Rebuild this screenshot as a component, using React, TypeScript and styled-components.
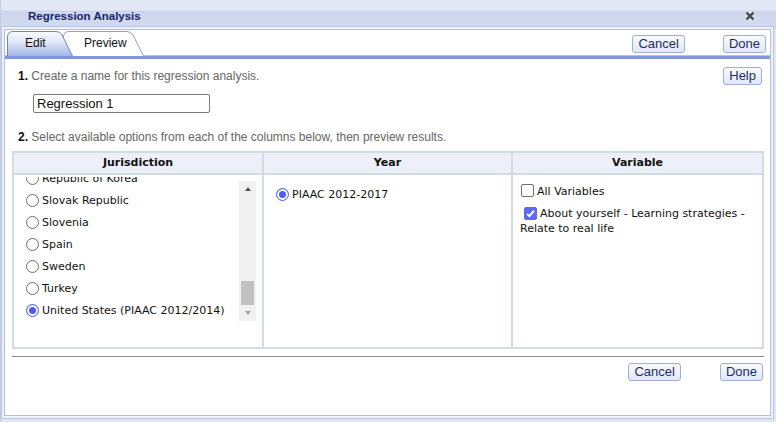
import React, { useLayoutEffect, useRef } from 'react';
import styled, { createGlobalStyle } from 'styled-components';

const GlobalStyle = createGlobalStyle`
  html, body { margin: 0; padding: 0; }
  body {
    background: #dfe5f3;
    font-family: "Liberation Sans", Arial, sans-serif;
  }
  * { box-sizing: border-box; }
`;

const countries = [
  'Austria', 'Belgium', 'Canada', 'Chile', 'Czech Republic', 'Denmark',
  'Estonia', 'Finland', 'France', 'Germany', 'Greece', 'Hungary', 'Ireland',
  'Israel', 'Italy', 'Japan', 'Kazakhstan', 'Lithuania', 'Mexico',
  'Netherlands', 'New Zealand', 'Norway', 'Peru', 'Poland',
  'Republic of Korea', 'Slovak Republic', 'Slovenia', 'Spain', 'Sweden',
  'Turkey', 'United States (PIAAC 2012/2014)',
];

const Window = styled.div`
  width: 776px;
  height: 422px;
  display: flex;
  flex-direction: column;
  background: linear-gradient(#e2e8f5 0, #e2e8f5 10px, #cdd6ed 11px, #d2daef 29px, #dfe5f3 30px);
  border-left: 1px solid #c4cde8;
`;

const TitleBar = styled.div`
  height: 29px;
  display: flex;
  align-items: center;
  padding: 3px 0 0 27px;
`;

const Title = styled.div`
  font: bold 11.5px "Liberation Sans", Arial, sans-serif;
  color: #17256b;
`;

const Close = styled.button`
  margin-left: auto;
  margin-right: 19px;
  width: 14px;
  height: 14px;
  padding: 0;
  border: none;
  background: none;
  display: flex;
`;

const Panel = styled.div`
  flex: 1;
  margin: 0 5px 6px 3px;
  display: flex;
  flex-direction: column;
  background: #fff;
  border: 1px solid #b3bedf;
  box-shadow: 0 0 0 2px #eef1f9, 0 0 0 3px #bcc6e3;
`;

const TabBar = styled.div`
  height: 29px;
  display: flex;
  align-items: flex-end;
  padding: 0 4px 0 2px;
  border-bottom: 3px solid #7f97d9;
  box-shadow: 0 -1px 0 #b4c3ea inset;
`;

const Tab = styled.div<{ $active?: boolean; $w: number; $pad: number }>`
  position: relative;
  width: ${p => p.$w}px;
  height: 25px;
  margin-left: ${p => (p.$active ? 0 : -10)}px;
  z-index: ${p => (p.$active ? 2 : 1)};
  padding-left: ${p => p.$pad}px;
  font-size: 12px;
  line-height: 24px;
  color: #111;
  cursor: pointer;
`;

const TabShape = styled.svg`
  position: absolute;
  left: 0;
  top: 0;
`;

const TabLabel = styled.span`
  position: relative;
`;

const Btn = styled.button<{ $gap?: number }>`
  height: 18px;
  padding: 0 5px;
  margin-right: ${p => p.$gap ?? 0}px;
  font: 13px "Liberation Sans", Arial, sans-serif;
  line-height: 16px;
  color: #1f2c62;
  border: 1px solid #9eb0da;
  border-radius: 3px;
  background: linear-gradient(#f7f9fd, #e1e8f7);
`;

const TopButtons = styled.div`
  margin-left: auto;
  align-self: flex-start;
  margin-top: 5px;
  display: flex;
`;

const Body = styled.div`
  padding: 0 6px 0 7px;
  display: flex;
  flex-direction: column;
`;

const StepRow = styled.div<{ $top: number }>`
  display: flex;
  align-items: center;
  margin-top: ${p => p.$top}px;
  padding: 0 2px 0 6px;
  min-height: 14px;
`;

const StepText = styled.div`
  font-size: 12px;
  line-height: 14px;
  color: #666;
  b { color: #111; }
`;

const NameInput = styled.input`
  width: 177px;
  height: 19px;
  margin: 9px 0 0 21px;
  padding: 0 3px;
  font: 13px "Liberation Sans", Arial, sans-serif;
  color: #111;
  border: 1px solid #7a7a7a;
  border-radius: 2px;
  outline: none;
`;

const Grid = styled.div`
  margin-top: 7px;
  display: grid;
  grid-template-columns: 248px 247px 249px;
  grid-template-rows: 20px 172px;
  gap: 2px;
  padding: 2px;
  background: #d2dde1;
  font-family: "DejaVu Sans", Verdana, sans-serif;
  font-size: 11px;
  color: #111;
`;

const HeadCell = styled.div`
  background: #edf0f9;
  font-weight: bold;
  text-align: center;
  line-height: 20px;
`;

const Cell = styled.div<{ $pad: string }>`
  background: #fff;
  padding: ${p => p.$pad};
`;

const ScrollArea = styled.div`
  display: flex;
  height: 144px;
`;

const List = styled.div`
  flex: 1;
  overflow: hidden;
`;

const Scrollbar = styled.div`
  width: 17px;
  margin-top: 4px;
  display: flex;
  flex-direction: column;
  background: #f1f1f1;
`;

const Arrow = styled.div<{ $down?: boolean }>`
  height: 16px;
  display: flex;
  align-items: center;
  justify-content: center;
  &::before {
    content: '';
    border-left: 3.5px solid transparent;
    border-right: 3.5px solid transparent;
    ${p => (p.$down ? 'border-top: 4px solid #a3a3a3;' : 'border-bottom: 4px solid #505050;')}
  }
`;

const Track = styled.div`
  flex: 1;
  display: flex;
  flex-direction: column;
  justify-content: flex-end;
  padding: 0 2px;
`;

const Thumb = styled.div`
  height: 24px;
  background: #c1c1c1;
`;

const Option = styled.label`
  display: flex;
  align-items: center;
  height: 22px;
  white-space: nowrap;
  cursor: pointer;
`;

const Radio = styled.span<{ $on?: boolean }>`
  flex: none;
  width: 13px;
  height: 13px;
  margin: 0 3px 0 4px;
  border-radius: 50%;
  border: 1px solid ${p => (p.$on ? '#5a6cf2' : '#6f6f6f')};
  background: ${p => (p.$on ? '#4c5ef1' : '#fff')};
  box-shadow: ${p => (p.$on ? 'inset 0 0 0 2px #fff' : 'none')};
`;

const VarOption = styled.label`
  display: block;
  line-height: 15px;
  margin-bottom: 7px;
  cursor: pointer;
`;

const Check = styled.span<{ $on?: boolean; $left: number }>`
  display: inline-flex;
  vertical-align: -2px;
  width: 13px;
  height: 13px;
  margin: 0 3px 0 ${p => p.$left}px;
  border-radius: 2px;
  border: 1px solid ${p => (p.$on ? '#5a6af2' : '#6f6f6f')};
  background: ${p => (p.$on ? '#5a6af2' : '#fff')};
`;

const Separator = styled.div`
  margin-top: 7px;
  height: 1px;
  background: #8a8a8a;
`;

const BottomButtons = styled.div`
  margin-top: 6px;
  display: flex;
  justify-content: flex-end;
  padding-right: 1px;
`;

const TabOutline = ({ w, id, active }: { w: number; id: string; active?: boolean }) => (
  <TabShape width={w} height={25} viewBox={`0 0 ${w} 25`}>
    <defs>
      <linearGradient id={id} x1="0" y1="0" x2="0" y2="1">
        <stop offset="0" stopColor="#fbfcff" />
        <stop offset="0.4" stopColor="#e1e8f8" />
        <stop offset="1" stopColor="#a3b6e7" />
      </linearGradient>
    </defs>
    <path
      d={`M0.5 25 V6 Q0.5 0.5 6 0.5 H${w - 17} Q${w - 13} 0.5 ${w - 11} 4 L${w - 0.5} 25`}
      fill={active ? `url(#${id})` : '#fff'}
      stroke={active ? '#6f84c5' : '#8e9fd3'}
    />
  </TabShape>
);

const CheckMark = () => (
  <svg width="11" height="11" viewBox="0 0 11 11">
    <path d="M2 5.8 L4.4 8.2 L9 2.6" fill="none" stroke="#fff" strokeWidth="1.9" />
  </svg>
);

export default function App() {
  const listRef = useRef<HTMLDivElement>(null);

  useLayoutEffect(() => {
    if (listRef.current) listRef.current.scrollTop = listRef.current.scrollHeight;
  }, []);

  return (
    <>
      <GlobalStyle />
      <Window>
        <TitleBar>
          <Title>Regression Analysis</Title>
          <Close aria-label="Close">
            <svg width="14" height="14" viewBox="0 0 14 14">
              <path d="M3.5 3.5 L10.5 10.5 M10.5 3.5 L3.5 10.5" stroke="#fff" strokeWidth="4.4" />
              <path d="M3.5 3.5 L10.5 10.5 M10.5 3.5 L3.5 10.5" stroke="#4d4f58" strokeWidth="2.6" />
            </svg>
          </Close>
        </TitleBar>
        <Panel>
          <TabBar>
            <Tab $active $w={66} $pad={18}>
              <TabOutline w={66} id="tab-edit" active />
              <TabLabel>Edit</TabLabel>
            </Tab>
            <Tab $w={81} $pad={21}>
              <TabOutline w={81} id="tab-preview" />
              <TabLabel>Preview</TabLabel>
            </Tab>
            <TopButtons>
              <Btn $gap={38}>Cancel</Btn>
              <Btn>Done</Btn>
            </TopButtons>
          </TabBar>
          <Body>
            <StepRow $top={8}>
              <StepText><b>1.</b> Create a name for this regression analysis.</StepText>
              <Btn style={{ marginLeft: 'auto' }}>Help</Btn>
            </StepRow>
            <NameInput defaultValue="Regression 1" />
            <StepRow $top={17}>
              <StepText><b>2.</b> Select available options from each of the columns below, then preview results.</StepText>
            </StepRow>
            <Grid>
              <HeadCell>Jurisdiction</HeadCell>
              <HeadCell>Year</HeadCell>
              <HeadCell>Variable</HeadCell>
              <Cell $pad="2px 6px 0 8px">
                <ScrollArea>
                  <List ref={listRef}>
                    {countries.map(c => (
                      <Option key={c}>
                        <Radio $on={c.startsWith('United States')} />
                        {c}
                      </Option>
                    ))}
                  </List>
                  <Scrollbar>
                    <Arrow />
                    <Track><Thumb /></Track>
                    <Arrow $down />
                  </Scrollbar>
                </ScrollArea>
              </Cell>
              <Cell $pad="8px 8px 0 8px">
                <Option>
                  <Radio $on />
                  PIAAC 2012-2017
                </Option>
              </Cell>
              <Cell $pad="9px 8px 0 7px">
                <VarOption>
                  <Check $left={1} />
                  All Variables
                </VarOption>
                <VarOption>
                  <Check $on $left={4}><CheckMark /></Check>
                  About yourself - Learning strategies - Relate to real life
                </VarOption>
              </Cell>
            </Grid>
            <Separator />
            <BottomButtons>
              <Btn $gap={39}>Cancel</Btn>
              <Btn>Done</Btn>
            </BottomButtons>
          </Body>
        </Panel>
      </Window>
    </>
  );
}
